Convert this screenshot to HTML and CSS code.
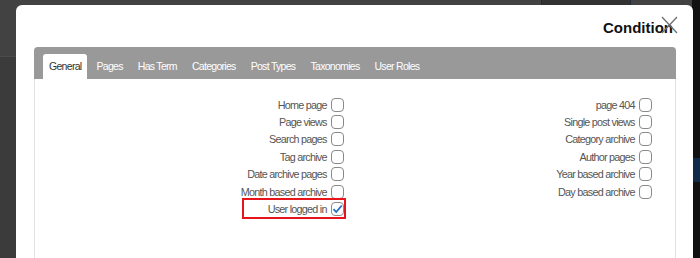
FILE: index.html
```html
<html>

<head>
  <meta name="viewport" content="width=device-width, initial-scale=1">
  <link rel="stylesheet" href="styles.css">
</head>

<body>
  <!-- page behind the overlay -->
  <div class="backdrop">
    <div class="topbar">
      <div class="topbar_button"></div>
    </div>
    <div class="side_strip">
      <div class="side_blue"></div>
    </div>
  </div>

  <!-- Condition dialog -->
  <div class="modal">
    <div class="modal_head">
      <h2 class="modal_title">Condition</h2>
      <span class="modal_close">
        <svg width="17" height="18" viewBox="0 0 17 18">
          <path d="M1 1 L16 17 M16 1 L1 17" stroke="#6f6f6f" stroke-width="1.3" fill="none" />
        </svg>
      </span>
    </div>

    <div class="tabs">
      <ul class="tab_bar">
        <li class="tab active">General</li>
        <li class="tab">Pages</li>
        <li class="tab">Has Term</li>
        <li class="tab">Categories</li>
        <li class="tab">Post Types</li>
        <li class="tab">Taxonomies</li>
        <li class="tab">User Roles</li>
      </ul>

      <div class="tab_body">
        <div class="cond_col">
          <label class="cond">Home page <span class="box"></span></label>
          <label class="cond">Page views <span class="box"></span></label>
          <label class="cond">Search pages <span class="box"></span></label>
          <label class="cond">Tag archive <span class="box"></span></label>
          <label class="cond">Date archive pages <span class="box"></span></label>
          <label class="cond">Month based archive <span class="box"></span></label>
          <label class="cond marked">User logged in <span class="box checked">
              <svg width="11" height="10" viewBox="0 0 11 10">
                <path d="M1.5 5.2 L4.2 8 L9.8 1.5" stroke="#1e6fc0" stroke-width="1.8" fill="none" />
              </svg>
            </span></label>
        </div>
        <div class="cond_col">
          <label class="cond">page 404 <span class="box"></span></label>
          <label class="cond">Single post views <span class="box"></span></label>
          <label class="cond">Category archive <span class="box"></span></label>
          <label class="cond">Author pages <span class="box"></span></label>
          <label class="cond">Year based archive <span class="box"></span></label>
          <label class="cond">Day based archive <span class="box"></span></label>
        </div>
      </div>
    </div>
  </div>
</body>

</html>
```

FILE: styles.css
```css
body {
  margin: 0;
  width: 700px;
  height: 258px;
  overflow: hidden;
  background: #3b3b3b;
  font-family: "Liberation Sans", Arial, sans-serif;
  font-size: 10.8px;
  letter-spacing: -0.75px;
  color: #555;
}

.backdrop {
  position: relative;
  height: 258px;
}

.topbar {
  height: 56px;
  background: #424242;
  border-bottom: 1px solid #4c4c4c;
}

.topbar_button {
  position: absolute;
  left: 541px;
  top: -4px;
  width: 88px;
  height: 8px;
  border: 1px solid #1f2a36;
  border-radius: 2px;
  background: #323232;
}

.side_strip {
  position: absolute;
  right: 0;
  top: 0;
  width: 8px;
  height: 258px;
  background: #111;
}

.side_blue {
  margin-top: 158px;
  height: 24px;
  background: #0f2b47;
}

.modal {
  position: absolute;
  left: 16px;
  top: 5px;
  width: 677px;
  height: 280px;
  background: #fff;
  border-radius: 6px;
  box-sizing: border-box;
  padding: 0 17px 0 18px;
}

.modal_head {
  position: relative;
  height: 42px;
}

.modal_title {
  margin: 0;
  position: absolute;
  right: 3px;
  top: 14px;
  font-size: 15px;
  font-weight: bold;
  letter-spacing: 0;
  color: #111;
  line-height: 18px;
}

.modal_close {
  position: absolute;
  right: -2px;
  top: 11px;
  line-height: 0;
}

.tabs {
  border: 1px solid #e2e2e2;
  border-top: 0;
  border-radius: 4px 4px 0 0;
  height: 240px;
}

.tab_bar {
  display: flex;
  margin: 0 -1px;
  padding: 7px 0 0 9px;
  list-style: none;
  background: #999;
  border-radius: 4px 4px 0 0;
  height: 25px;
  font-size: 10.5px;
  letter-spacing: -0.7px;
}

.tab {
  padding: 0 6px;
  margin-right: 3px;
  line-height: 25px;
  color: #fff;
  border-radius: 3px 3px 0 0;
}

.tab.active {
  background: #fff;
  color: #333;
}

.tab_body {
  display: grid;
  grid-template-columns: 309px 308px;
  padding-top: 17px;
}

.cond_col {
  display: flex;
  flex-direction: column;
  align-items: flex-end;
}

.cond {
  display: flex;
  align-items: center;
  height: 17.4px;
  white-space: pre;
}

.box {
  display: inline-flex;
  align-items: center;
  justify-content: center;
  width: 11px;
  height: 12px;
  margin-left: 2px;
  border: 1px solid #8a8a8a;
  border-radius: 4px;
  background: #fff;
}

.cond.marked {
  outline: 2px solid #e8141c;
  padding-left: 24px;
  height: 17px;
}
```
